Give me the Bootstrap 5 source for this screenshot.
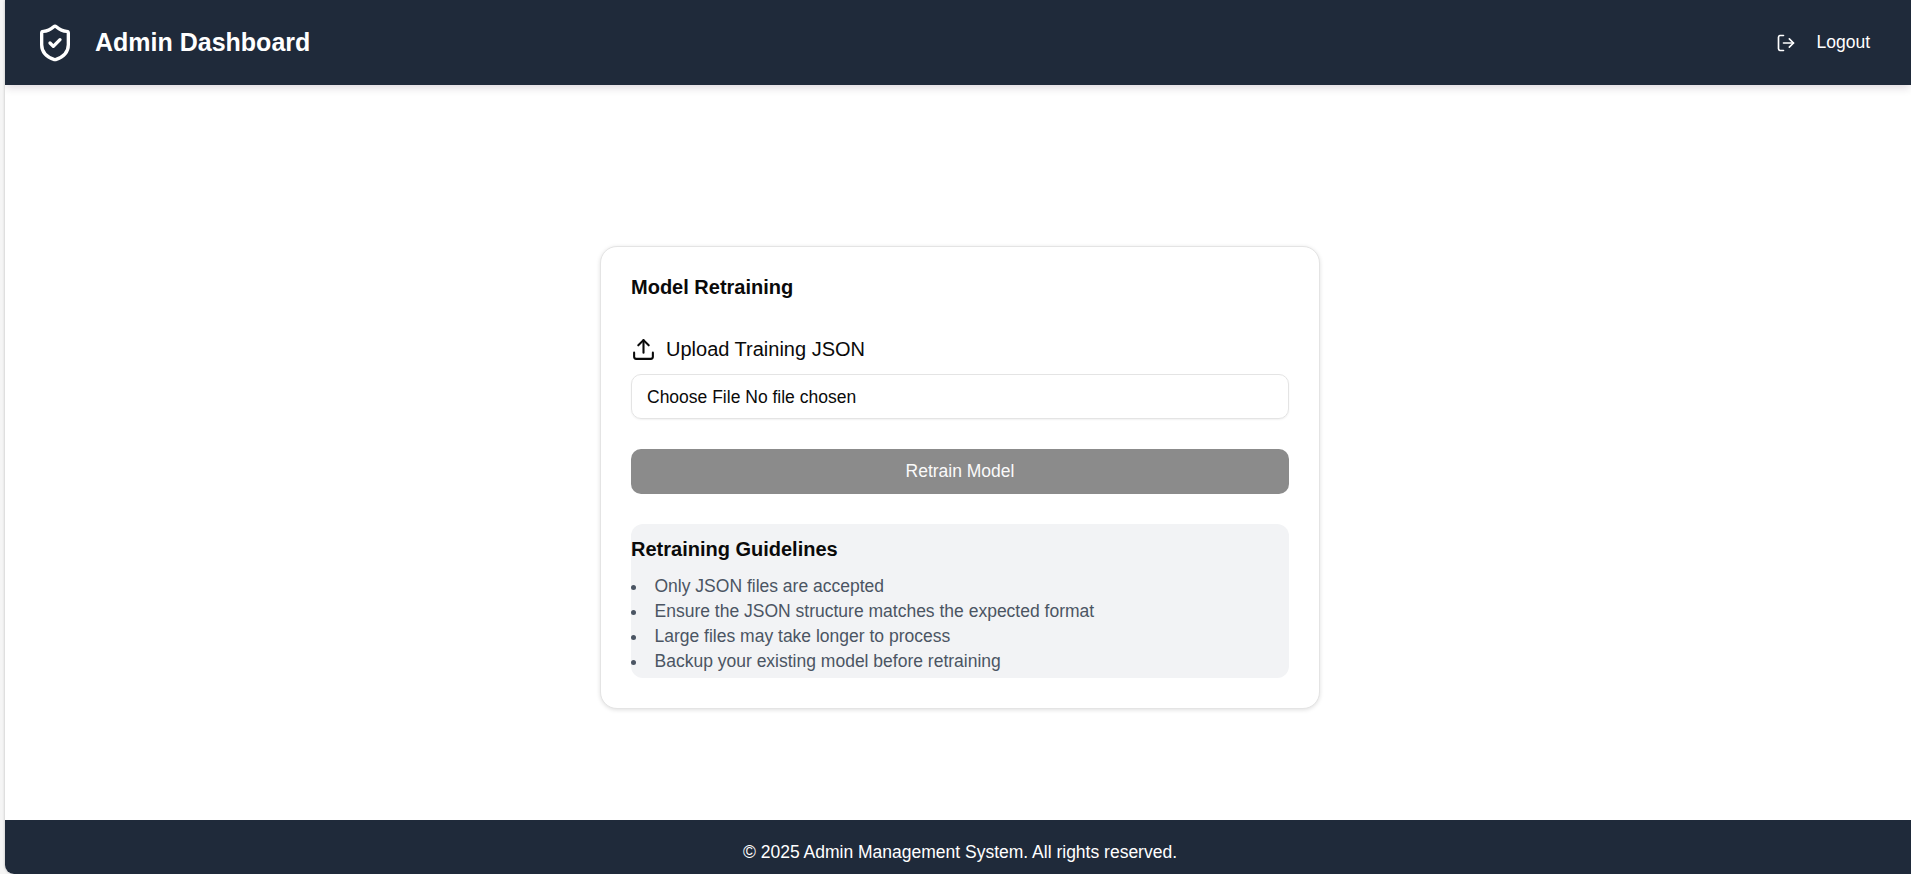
<!DOCTYPE html>
<html lang="en">
<head>
<meta charset="utf-8">
<meta name="viewport" content="width=device-width, initial-scale=1">
<title>Admin Dashboard</title>
<link href="https://cdn.jsdelivr.net/npm/bootstrap@5.3.0/dist/css/bootstrap.min.css" rel="stylesheet">
<style>
  body { font-family: "Liberation Sans", Arial, sans-serif; font-size: 17.5px; line-height: 25px; color: #0a0a0a; background: #f5f5f5; padding-left: 5px; }
  .app-shell { height: 874px; border-bottom-left-radius: 9px; box-shadow: 0 0 3px rgba(0,0,0,.25); }
  .bar-dark { background: #1f2a3a; color: #fff; }
  .app-header { height: 85px; padding: 0 41px 0 30px; box-shadow: 0 4px 8px -1px rgba(40,10,40,.15); z-index: 1; }
  .app-title { font-size: 25px; line-height: 35px; }
  .app-main { padding-left: 4px; }
  .app-footer { height: 54px; padding: 20px 0 0 4px; }
  .logout-link { color: #fff; gap: 20px; }
  .retrain-card { width: 720px; height: 463px; padding: 30px; margin-top: 50px; border: 1px solid #e4e4e4; border-radius: 17px; box-shadow: 0 1px 4px rgba(0,0,0,.13); }
  .card-heading { font-size: 20px; line-height: 20px; margin-bottom: 40px; }
  .upload-label { font-size: 20px; line-height: 25px; gap: 10px; margin-bottom: 12px; }
  .file-field { height: 45px; padding: 1px 15px 0; border: 1px solid #e4e4e4; border-radius: 10px; box-shadow: 0 1px 2px rgba(0,0,0,.06); margin-bottom: 30px; cursor: pointer; }
  .retrain-btn, .retrain-btn:disabled { height: 45px; padding: 0; border: 0; border-radius: 10px; background: #8b8b8b; color: #fafafa; opacity: 1; font-size: 17.5px; margin-bottom: 30px; }
  .guidelines { height: 154px; padding-top: 10px; background: #f2f3f5; border-radius: 12px; }
  .guidelines h2 { font-size: 20px; line-height: 30px; margin-bottom: 10px; }
  .guidelines ul { color: #4b5563; list-style: disc inside; }
  svg { fill: none; stroke: currentColor; stroke-width: 2; stroke-linecap: round; stroke-linejoin: round; flex: none; }
</style>
</head>
<body class="overflow-hidden">
<div class="app-shell d-flex flex-column bg-white overflow-hidden">
  <header class="app-header bar-dark navbar flex-nowrap justify-content-between flex-shrink-0">
    <div class="d-flex align-items-center">
      <svg width="40" height="40" viewBox="0 0 24 24"><path d="M20 13c0 5-3.500 7.500-7.660 8.950a1 1 0 0 1-.67-.01C7.500 20.500 4 18 4 13V6a1 1 0 0 1 1-1c2 0 4.500-1.200 6.240-2.720a1.170 1.170 0 0 1 1.520 0C14.510 3.810 17 5 19 5a1 1 0 0 1 1 1z"/><path d="m9 12 2 2 4-4"/></svg>
      <h1 class="app-title fw-bold mb-0 ms-3"><span class="ps-1">Admin Dashboard</span></h1>
    </div>
    <a href="#" class="logout-link d-flex align-items-center text-decoration-none">
      <svg width="20" height="20" viewBox="0 0 24 24"><path d="M9 21H5a2 2 0 0 1-2-2V5a2 2 0 0 1 2-2h4"/><path d="m16 17 5-5-5-5"/><path d="M21 12H9"/></svg>
      <span>Logout</span>
    </a>
  </header>
  <main class="app-main flex-grow-1 d-flex align-items-center justify-content-center">
    <section class="retrain-card bg-white">
      <h2 class="card-heading fw-bold">Model Retraining</h2>
      <label for="training" class="upload-label d-flex align-items-center">
        <svg width="25" height="25" viewBox="0 0 24 24"><path d="M21 15v4a2 2 0 0 1-2 2H5a2 2 0 0 1-2-2v-4"/><path d="m17 8-5-5-5 5"/><path d="M12 3v12"/></svg>
        <span>Upload Training JSON</span>
      </label>
      <div id="training" class="file-field d-flex align-items-center"><span>Choose File No file chosen</span></div>
      <button type="button" class="retrain-btn btn w-100 d-block" disabled>Retrain Model</button>
      <div class="guidelines">
        <h2 class="fw-bold">Retraining Guidelines</h2>
        <ul class="p-0 m-0">
          <li>Only JSON files are accepted</li>
          <li>Ensure the JSON structure matches the expected format</li>
          <li>Large files may take longer to process</li>
          <li>Backup your existing model before retraining</li>
        </ul>
      </div>
    </section>
  </main>
  <footer class="app-footer bar-dark text-center flex-shrink-0">© 2025 Admin Management System. All rights reserved.</footer>
</div>
<script src="https://cdn.jsdelivr.net/npm/bootstrap@5.3.0/dist/js/bootstrap.bundle.min.js"></script>
</body>
</html>
